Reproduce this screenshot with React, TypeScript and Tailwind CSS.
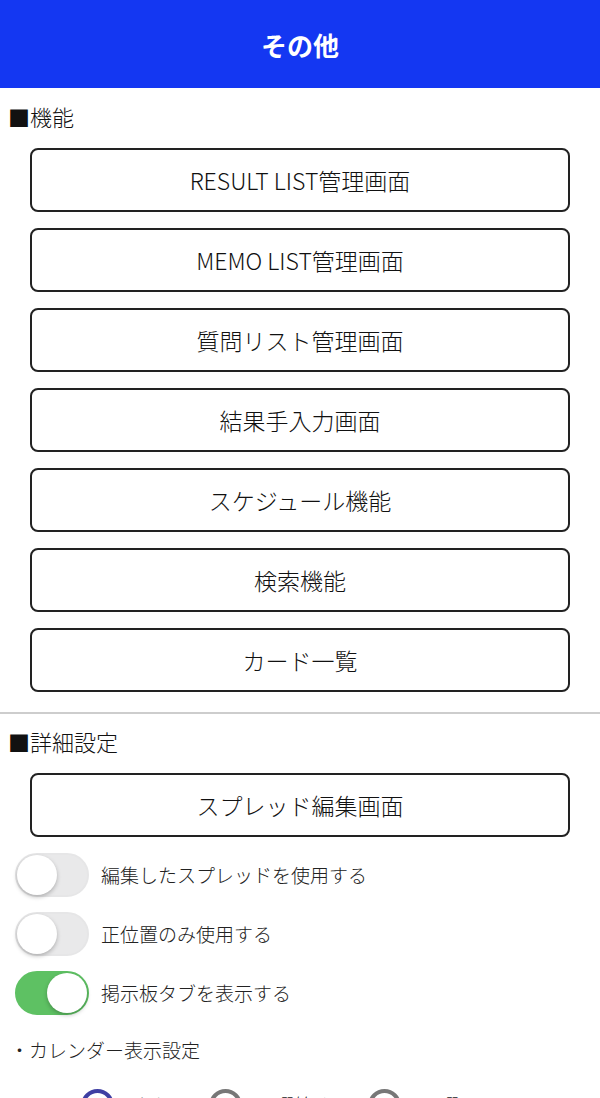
import { useState } from 'react'

const FONT = { fontFamily: '"Noto Sans CJK JP", "Noto Sans", sans-serif' }

const features = [
  'RESULT LIST管理画面',
  'MEMO LIST管理画面',
  '質問リスト管理画面',
  '結果手入力画面',
  'スケジュール機能',
  '検索機能',
  'カード一覧',
]

function NavButton({ label }: { label: string }) {
  return (
    <button className="h-[64px] w-full rounded-[8px] border-2 border-[#222] bg-white text-[23px] font-light text-[#111]">
      {label}
    </button>
  )
}

function Toggle({ on, onChange }: { on: boolean; onChange: () => void }) {
  return (
    <button
      onClick={onChange}
      className={
        'relative h-[44px] w-[74px] shrink-0 rounded-full border-2 transition-colors ' +
        (on ? 'border-[#5ec163] bg-[#5ec163]' : 'border-[#e6e6e7] bg-[#e9e9ea]')
      }
    >
      <span
        className={
          'absolute top-0 h-[40px] w-[40px] rounded-full bg-white shadow-[0_2px_4px_rgba(0,0,0,0.25)] transition-all ' +
          (on ? 'left-[30px]' : 'left-0')
        }
      />
    </button>
  )
}

function Radio({ checked }: { checked: boolean }) {
  return (
    <span
      className={
        'flex h-[33px] w-[33px] shrink-0 items-center justify-center rounded-full border-[4px] ' +
        (checked ? 'border-[#3f3fa3]' : 'border-[#777]')
      }
    >
      {checked && <span className="h-[15px] w-[15px] rounded-full bg-[#3f3fa3]" />}
    </span>
  )
}

export default function App() {
  const [sw, setSw] = useState([false, false, true])
  const toggles = ['編集したスプレッドを使用する', '正位置のみ使用する', '掲示板タブを表示する']

  return (
    <div className="h-[1098px] overflow-hidden bg-white" style={FONT}>
      <header className="flex h-[88px] items-center justify-center bg-[#1437f2]">
        <h1 className="text-[26px] font-bold text-white">その他</h1>
      </header>

      <div className="flex h-[60px] items-center pb-1 pl-2 text-[22px] font-light text-[#111]">■機能</div>
      <div className="flex flex-col gap-4 px-[30px]">
        {features.map(f => (
          <NavButton key={f} label={f} />
        ))}
      </div>

      <div className="mt-5 border-t-2 border-[#cdcdcd]" />

      <div className="flex h-[59px] items-center pb-1 pl-2 text-[22px] font-light text-[#111]">■詳細設定</div>
      <div className="px-[30px]">
        <NavButton label="スプレッド編集画面" />
      </div>

      <div className="mt-4 flex flex-col gap-[15px] pl-[15px]">
        {toggles.map((t, i) => (
          <div key={t} className="flex items-center gap-3">
            <Toggle on={sw[i]} onChange={() => setSw(sw.map((v, j) => (j === i ? !v : v)))} />
            <span className="text-[19px] font-light text-[#222]">{t}</span>
          </div>
        ))}
      </div>

      <div className="mt-[22px] pl-[10px] text-[19px] font-light leading-[26px] text-[#222]">・カレンダー表示設定</div>

      <div className="mt-[26px] flex items-center text-[19px] font-light text-[#222]">
        <span className="w-[81px] pl-[16px]">・</span>
        <Radio checked />
        <span className="ml-[20px] w-[75px]">あり</span>
        <Radio checked={false} />
        <span className="ml-[14px] w-[112px]">日曜始め</span>
        <Radio checked={false} />
        <span className="ml-[20px]">月曜日</span>
      </div>
    </div>
  )
}
